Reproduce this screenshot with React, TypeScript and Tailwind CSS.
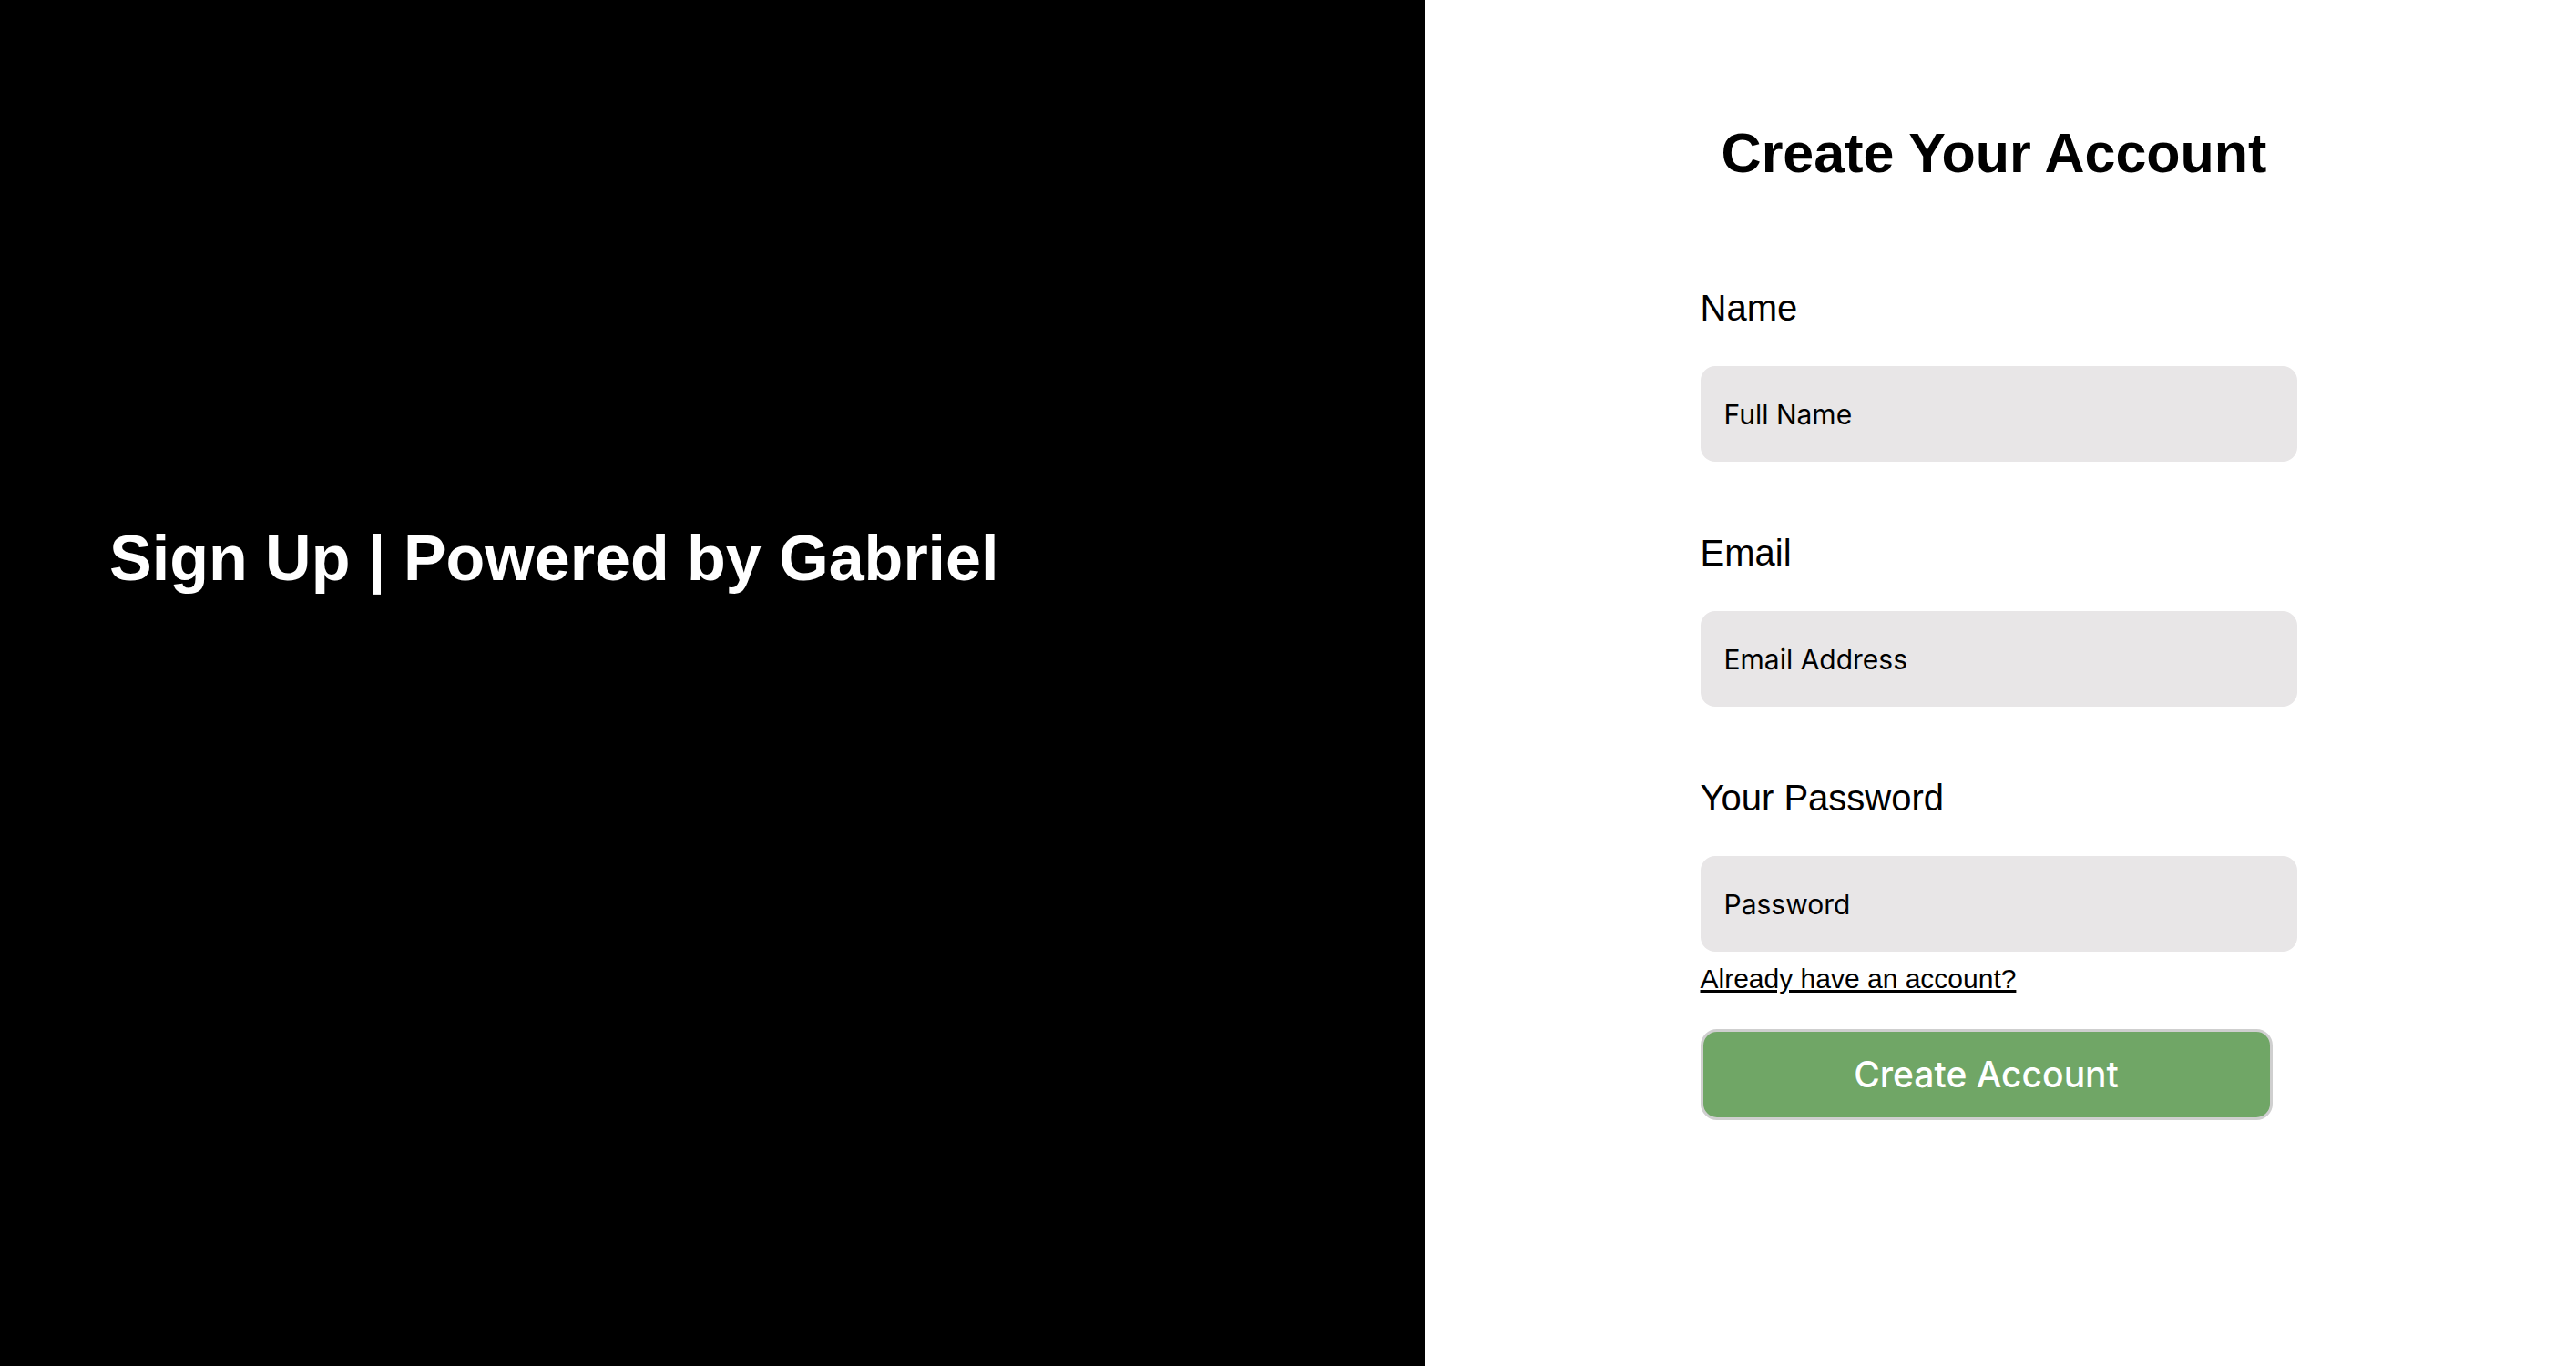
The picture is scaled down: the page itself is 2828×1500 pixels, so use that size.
import React from 'react';

const sans = "font-['Liberation_Sans',Arial,sans-serif]";
const ui = "font-['Inter','Noto_Sans',sans-serif]";

function Field({ label, placeholder, type = 'text' }: { label: string; placeholder: string; type?: string }) {
    return (
        <div className="flex flex-col">
            <label className={`${sans} text-[40px] leading-[46px] text-black`}>{label}</label>
            <input
                type={type}
                placeholder={placeholder}
                className={`${ui} mt-[41px] h-[105px] w-full rounded-[16px] bg-[#e8e6e7] px-[26px] text-[30px] text-black outline-none placeholder:text-black`}
            />
        </div>
    );
}

export default function App() {
    return (
        <div className="flex h-[1500px] w-full">
            {/* Left brand panel */}
            <div className="w-[1564px] shrink-0 bg-black pl-[120px] pt-[573px]">
                <h1 className={`${sans} text-[70px] font-bold leading-[80px] text-white`}>
                    Sign Up | Powered by Gabriel
                </h1>
            </div>

            {/* Right form panel */}
            <div className="flex flex-1 justify-center bg-white pr-[4px] pt-[134px]">
                <div className="flex w-[655px] flex-col">
                    <h2 className={`${sans} -ml-[10px] text-center text-[61px] font-bold leading-[69px] text-black`}>
                        Create Your Account
                    </h2>

                    <div className="mt-[112px] flex flex-col gap-[77px]">
                        <Field label="Name" placeholder="Full Name" />
                        <Field label="Email" placeholder="Email Address" type="email" />
                        <Field label="Your Password" placeholder="Password" type="password" />
                    </div>

                    <a href="#" className={`${sans} mt-[12px] self-start text-[30px] leading-[35px] text-black underline`}>
                        Already have an account?
                    </a>

                    <button
                        className={`${ui} mt-[38px] h-[100px] w-[628px] rounded-[18px] border-[3px] border-[#cfcfcf] bg-[#70a666] text-[39px] font-medium text-white`}
                    >
                        Create Account
                    </button>
                </div>
            </div>
        </div>
    );
}
